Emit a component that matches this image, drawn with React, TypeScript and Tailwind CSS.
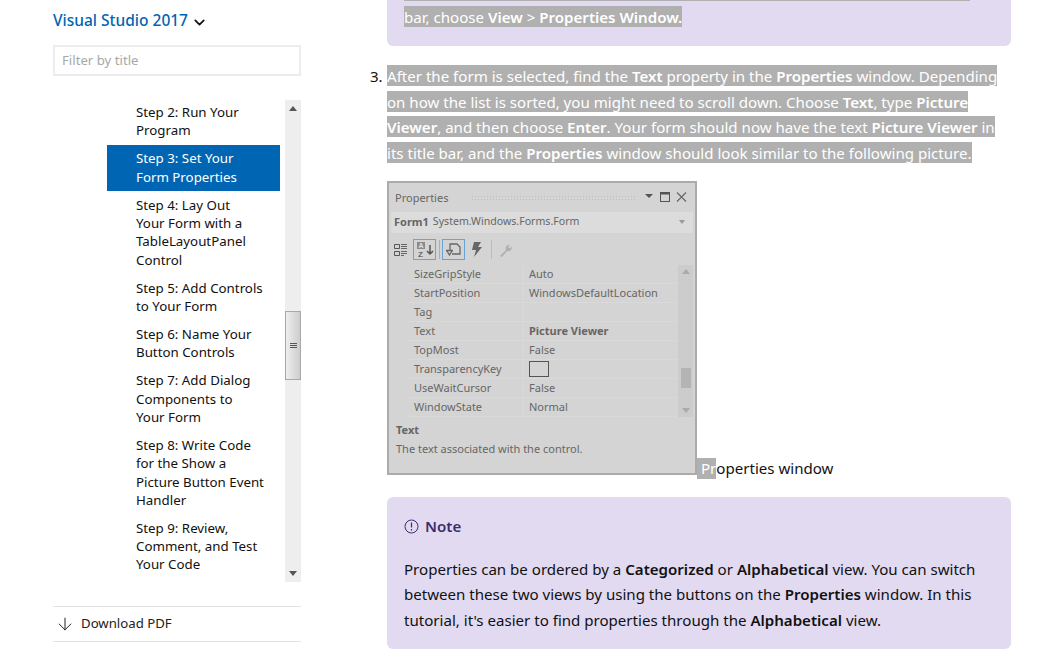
import { ArrowDown, ChevronDown } from 'lucide-react';

const tocItems = [
  { lines: ['Step 2: Run Your', 'Program'] },
  { lines: ['Step 3: Set Your', 'Form Properties'], active: true },
  { lines: ['Step 4: Lay Out', 'Your Form with a', 'TableLayoutPanel', 'Control'] },
  { lines: ['Step 5: Add Controls', 'to Your Form'] },
  { lines: ['Step 6: Name Your', 'Button Controls'] },
  { lines: ['Step 7: Add Dialog', 'Components to', 'Your Form'] },
  { lines: ['Step 8: Write Code', 'for the Show a', 'Picture Button Event', 'Handler'] },
  { lines: ['Step 9: Review,', 'Comment, and Test', 'Your Code'] },
];

const propRows = [
  { name: 'SizeGripStyle', value: 'Auto' },
  { name: 'StartPosition', value: 'WindowsDefaultLocation' },
  { name: 'Tag', value: '' },
  { name: 'Text', value: 'Picture Viewer', bold: true },
  { name: 'TopMost', value: 'False' },
  { name: 'TransparencyKey', value: '', swatch: true },
  { name: 'UseWaitCursor', value: 'False' },
  { name: 'WindowState', value: 'Normal' },
];

const Sel = ({ children }: { children: React.ReactNode }) => (
  <div className="w-fit h-[21px] bg-[#b0b0b0] leading-[22px] text-white whitespace-nowrap">{children}</div>
);

const B = ({ children }: { children: React.ReactNode }) => <span className="font-semibold">{children}</span>;

const Sidebar = () => (
  <aside className="w-[248px] ml-[53px] shrink-0 flex flex-col">
    <div className="mt-[11px] flex items-center h-[20px] text-[15.5px] font-medium text-[#0065b3]">
      Visual Studio 2017
      <ChevronDown className="ml-[3px] mt-[2px] w-[17px] h-[17px] text-[#111]" strokeWidth={2.4} />
    </div>
    <div className="mt-[14px] h-[31px] border-2 border-[#ececec] pl-[7px] pt-[1px] flex items-center text-[13.2px] text-[#a8a8a8]">
      Filter by title
    </div>
    <div className="mt-[24px] h-[482px] flex overflow-hidden">
      <div className="w-[232px] shrink-0 pl-[54px] pr-[5px] -mt-[1.7px]">
        {tocItems.map((item) => (
          <div
            key={item.lines[0]}
            className={
              item.active
                ? 'bg-[#0065b3] text-white pl-[29px] py-[4.8px] text-[13.3px] leading-[18.35px]'
                : 'text-[#111] pl-[29px] py-[4.8px] text-[13.3px] leading-[18.35px]'
            }
          >
            {item.lines.map((line) => (
              <div key={line} className="whitespace-nowrap">{line}</div>
            ))}
          </div>
        ))}
      </div>
      <div className="w-[16px] h-full bg-[#eeeeee] flex flex-col items-center justify-between py-[6px] relative">
        <svg width="8" height="5" viewBox="0 0 8 5"><path d="M4 0 8 5H0z" fill="#555" /></svg>
        <div className="absolute top-[211px] left-0 w-[16px] h-[69px] border border-[#a8a8a8] bg-gradient-to-r from-[#eeeeee] to-[#cdcdcd] flex flex-col items-center justify-center gap-[1px]">
          <div className="w-[7px] h-[1px] bg-[#555]" />
          <div className="w-[7px] h-[1px] bg-[#555]" />
          <div className="w-[7px] h-[1px] bg-[#555]" />
        </div>
        <svg width="8" height="5" viewBox="0 0 8 5"><path d="M4 5 8 0H0z" fill="#555" /></svg>
      </div>
    </div>
    <div className="mt-[24px] h-[36px] border-y border-[#e3e3e3] flex items-center text-[13.2px] text-[#222]">
      <ArrowDown className="ml-[2px] w-[20px] h-[20px]" strokeWidth={1.2} />
      <span className="ml-[6px] -mt-[1px]">Download PDF</span>
    </div>
  </aside>
);

const PropertiesPanel = () => (
  <div className="w-[310px] h-[294px] shrink-0 border-2 border-[#ababab] bg-[#d4d4d4] text-[#666] text-[11px] flex flex-col">
    <div className="h-[29px] flex items-center pl-[6px] pr-[3px] shrink-0">
      <span className="w-[76px] pt-[2px]">Properties</span>
      <div className="w-[166px] h-[5px] bg-[radial-gradient(#bdbdbd_1px,transparent_1px)] bg-[length:3px_3px]" />
      <svg className="ml-[8px]" width="43" height="12" viewBox="0 0 43 12">
        <path d="M0 3h8L4 7z" fill="#555" />
        <rect x="15.5" y="1.5" width="9" height="9" fill="none" stroke="#555" />
        <path d="M15 2.5h10" stroke="#555" strokeWidth="2" />
        <path d="M32 1.5l9 9M41 1.5l-9 9" stroke="#666" strokeWidth="1.1" />
      </svg>
    </div>
    <div className="h-[21px] mx-[2px] bg-[#dcdcdc] flex items-center pl-[3px] pr-[8px] shrink-0">
      <span className="font-bold">Form1</span>
      <span className="ml-[4px] text-[10.6px]">System.Windows.Forms.Form</span>
      <svg className="ml-auto" width="6" height="4" viewBox="0 0 6 4"><path d="M0 0h6L3 4z" fill="#999" /></svg>
    </div>
    <div className="h-[25px] mt-[4px] flex items-center pl-[4px] shrink-0">
      <svg width="124" height="24" viewBox="0 0 124 24" fill="none">
        <path d="M1.5 7.5h5v4h-5zM1.5 14.5h5v4h-5z" stroke="#555" />
        <path d="M8 7.5h6M8 9.500h6M8 11.500h6M8 14.500h6M8 16.500h6M8 18.500h3" stroke="#666" />
        <rect x="20.5" y="2.5" width="22" height="20" stroke="#6aa3d8" />
        <rect x="24" y="5" width="8" height="7" fill="#8a8a8a" />
        <text x="25.5" y="11" fontSize="7" fontWeight="700" fill="#e0e0e0" fontFamily="Liberation Sans">A</text>
        <text x="25" y="20" fontSize="8" fontWeight="700" fill="#666" fontFamily="Liberation Sans">Z</text>
        <path d="M37 8v9M34 14l3 3 3-3" stroke="#555" strokeWidth="1.5" />
        <path d="M46.5 3v19" stroke="#b0b0b0" />
        <rect x="49.5" y="2.5" width="22" height="20" stroke="#6aa3d8" />
        <path d="M57 13V7h7l3 3v7h-8M53 13.500h7M54 14l2.500 4 2.500-4" stroke="#666" strokeWidth="1.3" />
        <path d="M81 5h7l-3 5h4l-8 10 2-7h-4z" fill="#666" />
        <path d="M98.5 3v19" stroke="#bdbdbd" />
        <path d="M107 19l6-6a3.500 3.500 0 0 1 4-5l-2 2 1.500 1.500 2-2a3.500 3.500 0 0 1-4.500 4.500l-5 6z" fill="#b0b0b0" />
      </svg>
    </div>
    <div className="flex h-[152px] mt-[3px] shrink-0">
      <div className="ml-[18px] w-[271px] shrink-0">
        {propRows.map((row) => (
          <div key={row.name} className="h-[19px] flex items-center border-b border-[#d9d9d9]">
            <span className="w-[117px] pl-[7px] border-r border-[#d9d9d9] h-full flex items-center">{row.name}</span>
            {row.swatch ? (
              <span className="ml-[5px] w-[20px] h-[16px] border border-[#555]" />
            ) : (
              <span className={row.bold ? 'pl-[5px] font-bold' : 'pl-[5px]'}>{row.value}</span>
            )}
          </div>
        ))}
      </div>
      <div className="w-[15px] bg-[#cccccc] flex flex-col items-center justify-between py-[4px] relative">
        <svg width="8" height="5" viewBox="0 0 8 5"><path d="M4 0 8 5H0z" fill="#aaa" /></svg>
        <div className="absolute top-[103px] left-[3px] w-[10px] h-[20px] bg-[#b4b4b4]" />
        <svg width="8" height="5" viewBox="0 0 8 5"><path d="M4 5 8 0H0z" fill="#aaa" /></svg>
      </div>
    </div>
    <div className="pl-[7px] pt-[6px]">
      <div className="font-bold leading-[14px]">Text</div>
      <div className="mt-[5px] leading-[14px]">The text associated with the control.</div>
    </div>
  </div>
);

export default function App() {
  return (
    <div className="w-[1042px] h-[655px] overflow-hidden bg-white flex font-['Noto_Sans',sans-serif]">
      <Sidebar />
      <main className="ml-[86px] w-[624px] shrink-0 text-[15.08px] text-[#111]">
        <div className="h-[46px] overflow-hidden bg-[#e2daf1] rounded-b-[6px] pl-[17px] flex flex-col justify-end gap-[4.6px] pb-[19px]">
          {/* sliver of the selected line scrolled off the top */}
          <div className="w-[566px] h-[21px] shrink-0 bg-[#b0b0b0]" />
          <Sel>bar, choose <B>View</B> &gt; <B>Properties Window.</B></Sel>
        </div>

        <div className="mt-[19px] relative">
          <span className="absolute -left-[17px] top-0 leading-[22px]">3.</span>
          <div className="flex flex-col gap-[4.6px]">
            <Sel>After the form is selected, find the <B>Text</B> property in the <B>Properties</B> window. Depending</Sel>
            <Sel>on how the list is sorted, you might need to scroll down. Choose <B>Text</B>, type <B>Picture</B></Sel>
            <Sel><B>Viewer</B>, and then choose <B>Enter</B>. Your form should now have the text <B>Picture Viewer</B> in</Sel>
            <Sel>its title bar, and the <B>Properties</B> window should look similar to the following picture.</Sel>
          </div>
        </div>

        <div className="mt-[18px] flex items-end">
          <PropertiesPanel />
          <div className="mb-[-4px] leading-[21px] whitespace-nowrap">
            <span className="inline-block bg-[#b0b0b0] text-white pl-[4px]">Pr</span>operties window
          </div>
        </div>

        <div className="mt-[22px] h-[152px] bg-[#e2daf1] rounded-[6px] pl-[17px] pt-[19px]">
          <div className="flex items-center h-[22px] text-[#3b2e6e] font-semibold">
            <svg className="mr-[6px]" width="15" height="15" viewBox="0 0 15 15" fill="none" stroke="#3b2e6e">
              <circle cx="7.500" cy="7.500" r="6.500" />
              <path d="M7.500 3.500v5M7.500 10v1.500" strokeWidth="1.200" />
            </svg>
            Note
          </div>
          <div className="mt-[19px] leading-[25.6px] whitespace-nowrap">
            <div>Properties can be ordered by a <B>Categorized</B> or <B>Alphabetical</B> view. You can switch</div>
            <div>between these two views by using the buttons on the <B>Properties</B> window. In this</div>
            <div>tutorial, it's easier to find properties through the <B>Alphabetical</B> view.</div>
          </div>
        </div>
      </main>
    </div>
  );
}
